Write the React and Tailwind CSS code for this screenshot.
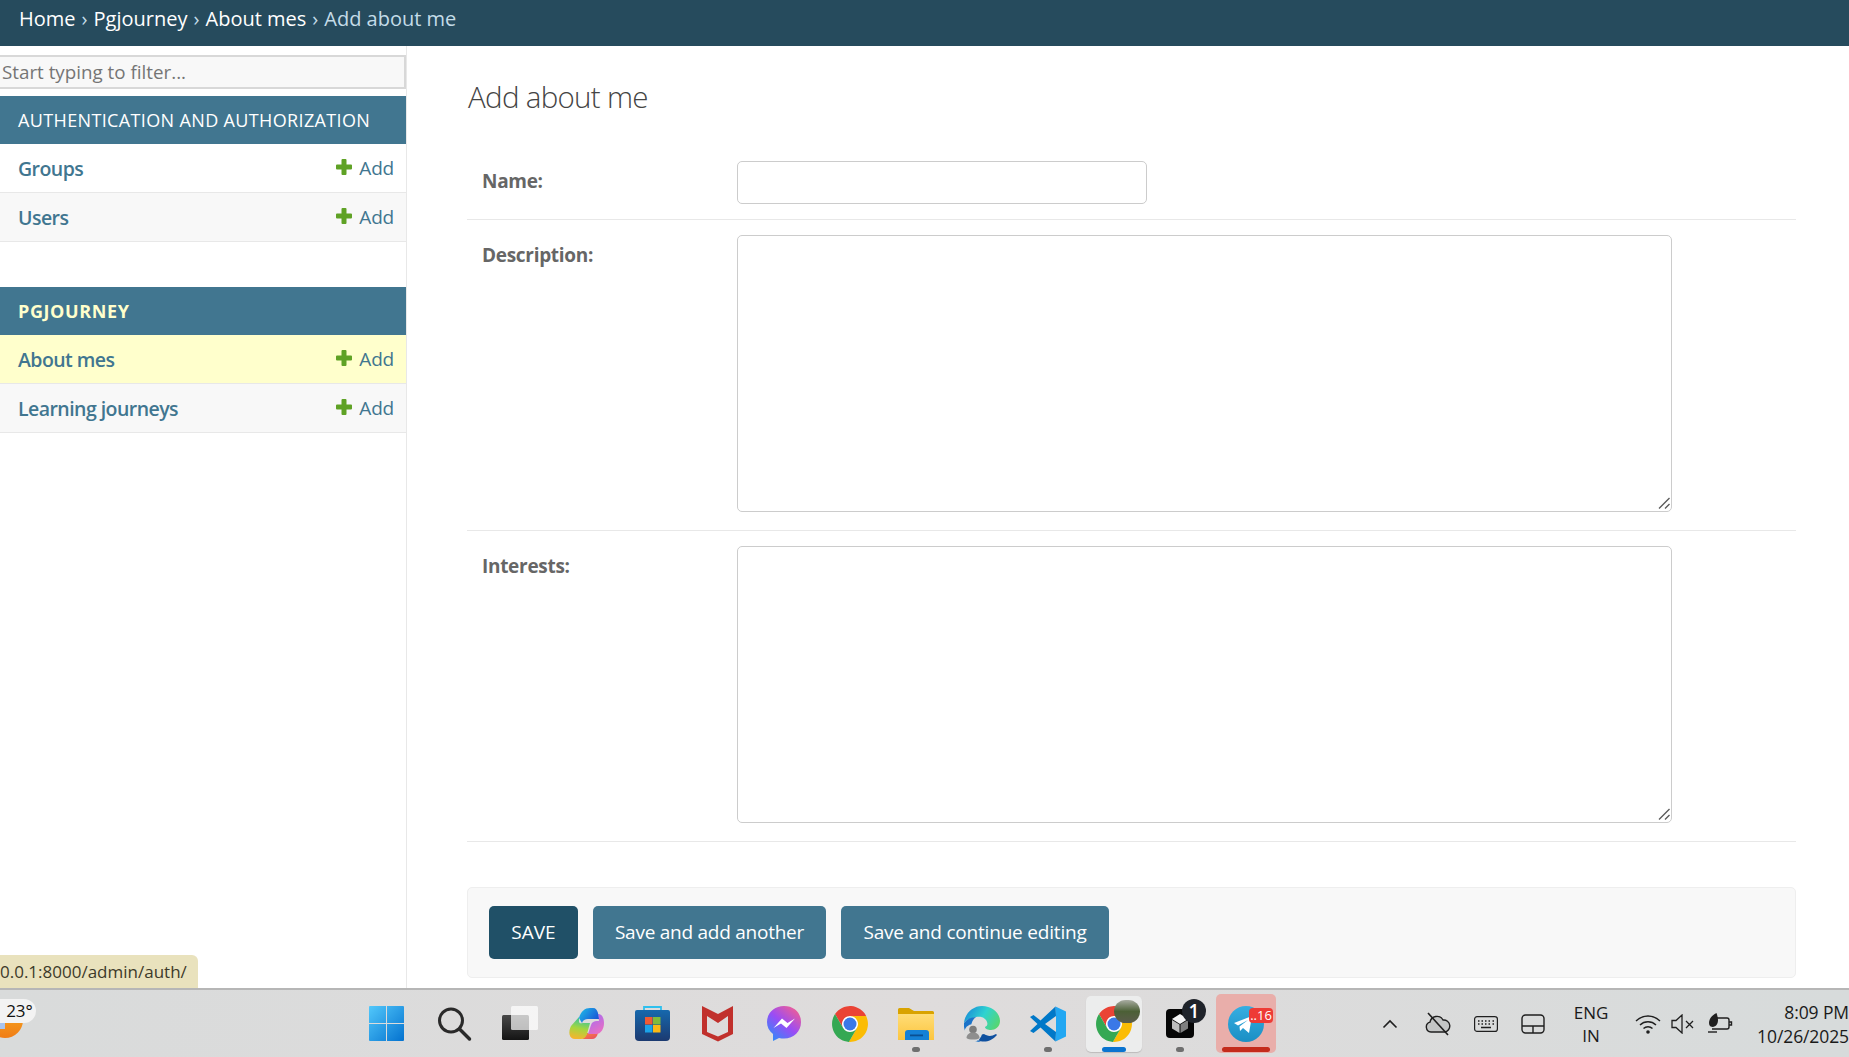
import React from 'react';

const FONT = 'font-["Open_Sans","Noto_Sans",sans-serif]';

const appGroups = [
  {
    name: 'Authentication and Authorization',
    models: [{ name: 'Groups' }, { name: 'Users' }],
  },
  {
    name: 'Pgjourney',
    current: true,
    models: [{ name: 'About mes', current: true }, { name: 'Learning journeys' }],
  },
];

const PlusIcon = () => (
  <svg width="16" height="16" viewBox="0 0 16 16" className="shrink-0 mb-[3px]">
    <path d="M5.500 1a1 1 0 0 1 1-1h3a1 1 0 0 1 1 1v4.500H15a1 1 0 0 1 1 1v3a1 1 0 0 1-1 1h-4.500V15a1 1 0 0 1-1 1h-3a1 1 0 0 1-1-1v-4.500H1a1 1 0 0 1-1-1v-3a1 1 0 0 1 1-1h4.500z" fill="#5fa225" />
  </svg>
);

const Sidebar = () => (
  <aside className="w-[407px] shrink-0 border-r border-[#e8e8e8] pt-[9px]">
    <input
      placeholder="Start typing to filter..."
      className="block w-full h-[34px] border-2 border-[#d8d8d8] border-l-0 bg-[#f8f8f8] px-[2px] text-[18.800px] text-[#333] placeholder:text-[#757575] outline-none"
    />
    {appGroups.map((group) => (
      <div key={group.name} className="mt-[7px] mb-[45px]">
        <div className={`h-[48px] bg-[#417690] flex items-center pl-[18px] text-[18px] uppercase ${group.current ? 'font-bold text-[#ffffcc] tracking-[0.6px]' : 'text-white tracking-[0.36px]'}`}>
          {group.name}
        </div>
        {group.models.map((model, i) => (
          <div
            key={model.name}
            className={`h-[49px] border-b border-[#e8e8e8] pt-[1px] flex items-center justify-between pl-[18px] pr-[12px] text-[#417690] text-[19px] ${model.current ? 'bg-[#ffffcc]' : i % 2 ? 'bg-[#f8f8f8]' : 'bg-white'}`}
          >
            <span className="font-semibold text-[19.500px] tracking-[-0.55px]">{model.name}</span>
            <span className="flex items-center gap-[7px] tracking-[-0.2px]">
              <PlusIcon />
              Add
            </span>
          </div>
        ))}
      </div>
    ))}
  </aside>
);

const FormRow = ({ label, children, className }) => (
  <div className={`flex border-b border-[#e8e8e8] pt-[15px] ${className}`}>
    <label className="w-[270px] shrink-0 pl-[15px] font-bold text-[#666] text-[19px] tracking-[-0.3px] leading-[40px]">{label}</label>
    {children}
  </div>
);

const Grip = () => (
  <svg width="12" height="12" viewBox="0 0 12 12" className="absolute right-[2px] bottom-[3px]" fill="none" stroke="#5c5c5c" strokeWidth="1.400">
    <path d="M1 11.500L11.500 1M7 11.500l4.500-4.500" />
  </svg>
);

const Area = () => (
  <div className="relative w-[935px] h-[277px]">
    <textarea className="block w-full h-full border border-[#cccccc] rounded-[5px] outline-none resize-none" />
    <Grip />
  </div>
);

const Main = () => (
  <main className="flex-1 min-w-0 pl-[60px] pr-[53px]">
    <h1 className="h-[100px] pt-[29px] text-[29.500px] tracking-[-0.7px] leading-[44px] font-light text-[#444] pl-[1px]">Add about me</h1>
    <FormRow label="Name:" className="h-[74px]">
      <input className="w-[410px] h-[43px] border border-[#cccccc] rounded-[5px] outline-none" />
    </FormRow>
    <FormRow label="Description:" className="h-[311px]">
      <Area />
    </FormRow>
    <FormRow label="Interests:" className="h-[311px]">
      <Area />
    </FormRow>
    <div className="mt-[45px] h-[91px] border border-[#eeeeee] rounded-[5px] bg-[#f8f8f8] flex items-center gap-[15px] pl-[21px] text-white text-[19px]">
      <button className="h-[53px] w-[89px] rounded-[5px] bg-[#205067] uppercase font-normal">Save</button>
      <button className="h-[53px] w-[233px] rounded-[5px] bg-[#417690] tracking-[-0.25px]">Save and add another</button>
      <button className="h-[53px] w-[268px] rounded-[5px] bg-[#417690] tracking-[-0.2px]">Save and continue editing</button>
    </div>
  </main>
);

// taskbar icons
const WindowsLogo = () => (
  <svg width="35" height="35" viewBox="0 0 35 35">
    <defs>
      <linearGradient id="win" x1="0" y1="0" x2="1" y2="1">
        <stop offset="0" stopColor="#52c8fb" />
        <stop offset="1" stopColor="#0472cf" />
      </linearGradient>
    </defs>
    <path d="M0 1a1 1 0 0 1 1-1h16v17H0zM18 0h16a1 1 0 0 1 1 1v16H18zM0 18h17v17H1a1 1 0 0 1-1-1zM18 18h17v16a1 1 0 0 1-1 1H18z" fill="url(#win)" />
  </svg>
);

const SearchIcon = () => (
  <svg width="36" height="36" viewBox="0 0 36 36" fill="none" stroke="#2a2a2a" strokeLinecap="round">
    <circle cx="15" cy="14.500" r="11.500" strokeWidth="3" />
    <path d="M23.500 23l10 10" strokeWidth="3.500" />
  </svg>
);

const TaskView = () => (
  <svg width="36" height="35" viewBox="0 0 36 35">
    <defs>
      <linearGradient id="tv" x1="0" y1="0" x2="0" y2="1">
        <stop offset="0" stopColor="#484848" />
        <stop offset="1" stopColor="#141414" />
      </linearGradient>
    </defs>
    <rect x="0" y="9" width="27" height="25" rx="1.500" fill="url(#tv)" />
    <rect x="9" y="0" width="27" height="24" rx="1.500" fill="#ffffff" fillOpacity="0.7" />
  </svg>
);

const Copilot = () => (
  <svg width="36" height="32" viewBox="0 0 36 32">
    <defs>
      <linearGradient id="cp1" x1="0" y1="0" x2="1" y2="0.600">
        <stop offset="0" stopColor="#1fc0e8" />
        <stop offset="1" stopColor="#1a56d6" />
      </linearGradient>
      <linearGradient id="cp2" x1="0.500" y1="0" x2="0.300" y2="1">
        <stop offset="0" stopColor="#2fc3a8" />
        <stop offset="0.500" stopColor="#a5d63f" />
        <stop offset="1" stopColor="#f8b32e" />
      </linearGradient>
      <linearGradient id="cp3" x1="0.300" y1="0" x2="0.800" y2="1">
        <stop offset="0" stopColor="#a66cf0" />
        <stop offset="1" stopColor="#ee6fc0" />
      </linearGradient>
      <linearGradient id="cp4" x1="0" y1="0" x2="1" y2="1">
        <stop offset="0" stopColor="#f98a38" />
        <stop offset="1" stopColor="#e8476a" />
      </linearGradient>
    </defs>
    <path d="M14 31h10c3 0 5-2 6-6H19c-1 3-3 5-5 6z" fill="url(#cp4)" />
    <path d="M11 9L3 18C0 24 1 31 7 31h6c3 0 5-2 6-5l3-11h-7c-2 0-3 1-4-1z" fill="url(#cp2)" />
    <path d="M30 6c4 0 6 4 6 9 0 6-3 11-8 11h-8l3-9c1-3 3-4 6-4h2z" fill="url(#cp3)" />
    <path d="M11 10C13 3 17 0 22 0h3c3 0 4 2 5 5l1 6H20c-3 0-5 1-6 4z" fill="url(#cp1)" />
  </svg>
);

const StoreIcon = () => (
  <svg width="35" height="35" viewBox="0 0 35 35">
    <defs>
      <linearGradient id="st" x1="0" y1="0" x2="0" y2="1">
        <stop offset="0" stopColor="#1668ad" />
        <stop offset="1" stopColor="#1c3a70" />
      </linearGradient>
    </defs>
    <path d="M9 5V1h17v4" fill="none" stroke="#2fc0ee" strokeWidth="1.800" />
    <path d="M0 6a2 2 0 0 1 2-2h31a2 2 0 0 1 2 2v25a4 4 0 0 1-4 4H4a4 4 0 0 1-4-4z" fill="url(#st)" />
    <path d="M10 11h7.500v7.500H10z" fill="#f05a33" />
    <path d="M18 11h7.500v7.500H18z" fill="#7fbb3c" />
    <path d="M10 19h7.500v7.500H10z" fill="#1ba3e8" />
    <path d="M18 19h7.500v7.500H18z" fill="#fab915" />
  </svg>
);

const McAfee = () => (
  <svg width="32" height="36" viewBox="0 0 32 36">
    <path fillRule="evenodd" d="M0 0l16 8 15-8v28l-15 7.500L0 28zM5 10v16l11 4.500L26 26V10l-10 7z" fill="#c1302c" />
  </svg>
);

const Messenger = () => (
  <svg width="34" height="36" viewBox="0 0 34 36">
    <defs>
      <linearGradient id="ms" x1="0.100" y1="1" x2="0.900" y2="0">
        <stop offset="0" stopColor="#2690fa" />
        <stop offset="0.500" stopColor="#9a4cf5" />
        <stop offset="1" stopColor="#f9608a" />
      </linearGradient>
    </defs>
    <path d="M17 0C7 0 0 7 0 16c0 5 2 9 6 12v7l6-3c2 .5 3 .6 5 .6 10 0 17-7.300 17-16.600S27 0 17 0z" fill="url(#ms)" />
    <path d="M6.500 22L15 12.500l5.500 4.500 7.500-4.500L19.500 22 14 17.500z" fill="#fff" />
  </svg>
);

const Chrome = () => (
  <svg width="36" height="36" viewBox="0 0 36 36">
    <circle cx="18" cy="18" r="8" fill="#fff" />
    <path d="M3.020 8.060A18 18 0 0 1 34.100 10H18a8 8 0 0 0-6.930 12z" fill="#ea4335" />
    <path d="M34.100 10A18 18 0 0 1 16.880 35.940L24.930 22A8 8 0 0 0 18 10z" fill="#fbbc04" />
    <path d="M16.880 35.940A18 18 0 0 1 3.020 8.060L11.070 22a8 8 0 0 0 13.860 0z" fill="#34a853" />
    <circle cx="18" cy="18" r="6.500" fill="#3b78e7" />
  </svg>
);

const Explorer = () => (
  <svg width="36" height="32" viewBox="0 0 36 32">
    <defs>
      <linearGradient id="ex" x1="0" y1="0" x2="0" y2="1">
        <stop offset="0" stopColor="#ffdd77" />
        <stop offset="1" stopColor="#fcc53f" />
      </linearGradient>
    </defs>
    <path d="M0 1.500A1.500 1.500 0 0 1 1.500 0H11l5 3h18.500A1.500 1.500 0 0 1 36 4.500V8H0z" fill="#d9a300" />
    <path d="M0 6h36v26H0z" fill="url(#ex)" />
    <path d="M7 25a3 3 0 0 1 3-3h18a3 3 0 0 1 3 3v7H7z" fill="#1581d6" />
    <rect x="12" y="26.500" width="13" height="1.800" fill="#0b4f91" />
  </svg>
);

const EdgeIcon = () => (
  <svg width="36" height="36" viewBox="0 0 36 36">
    <defs>
      <linearGradient id="ed" x1="0" y1="0.300" x2="1" y2="0.700">
        <stop offset="0" stopColor="#1a8ed8" />
        <stop offset="0.500" stopColor="#2fd3d0" />
        <stop offset="1" stopColor="#57d66e" />
      </linearGradient>
    </defs>
    <path d="M0 17C1 7 9 0 18 0c10 0 18 7 18 15 0 6-5 9-9 9-3 0-6-1-6-3 3-1 3-4 1-7-2-3-6-4-10-3-5 1-10 3-12 6z" fill="url(#ed)" />
    <path d="M0 17c3-4 7-6 12-6-4 3-6 8-4 14 1 5 5 9 9 11C7 36-1 28 0 17z" fill="#1b73c9" />
    <path d="M14 34c5 3 13 2 19-5l-1-1c-5 3-9 2-12 0-3 0-5 3-6 6z" fill="#0e4f9f" />
    <circle cx="9" cy="27" r="9" fill="#dcdcdc" />
    <circle cx="9" cy="23.500" r="3.800" fill="#7d7d7d" />
    <path d="M2.500 32c0-3.500 3-5.500 6.500-5.500s6.500 2 6.500 5.500c-2 2-11 2-13 0z" fill="#8e8e8e" />
  </svg>
);

const VSCode = () => (
  <svg width="36" height="36" viewBox="0 0 36 36">
    <path d="M25.500 0.500L36 5.500v25l-10.500 5 .5-9.500V10z" fill="#22a7f2" />
    <path d="M25.500 0.500L10.500 14.500 3.500 9 0 11l7.500 7L0 25l3.500 2 7-5.500 15 14 .5-9.500L15 18l11-8z" fill="#0078c8" />
  </svg>
);

const BoxIcon = () => (
  <svg width="28" height="29" viewBox="0 0 28 29">
    <rect x="0" y="0" width="28" height="29" rx="4" fill="#060606" />
    <path d="M6 10l8-5 8 5-8 5z" fill="#f4f4f4" />
    <path d="M6 11l7.500 4.500V24L6 19.500z" fill="#bdbdbd" />
    <path d="M22 11l-7.500 4.500V24l7.500-4.500z" fill="#7f7f7f" />
  </svg>
);

const Telegram = () => (
  <svg width="36" height="36" viewBox="0 0 36 36">
    <defs>
      <linearGradient id="tg" x1="0.500" y1="0" x2="0.500" y2="1">
        <stop offset="0" stopColor="#37aee2" />
        <stop offset="1" stopColor="#1a8fc4" />
      </linearGradient>
    </defs>
    <circle cx="18" cy="18" r="18" fill="url(#tg)" />
    <path d="M6 17l18-7-3 17-6-5-3 3-.5-4.500L20 14l-10 5.500z" fill="#fff" />
  </svg>
);

const taskItems = [
  { id: 'start', icon: <WindowsLogo />, nudge: 'mr-[3px]' },
  { id: 'search', icon: <SearchIcon /> },
  { id: 'taskview', icon: <TaskView /> },
  { id: 'copilot', icon: <Copilot /> },
  { id: 'store', icon: <StoreIcon /> },
  { id: 'mcafee', icon: <McAfee /> },
  { id: 'messenger', icon: <Messenger /> },
  { id: 'chrome', icon: <Chrome /> },
  { id: 'explorer', icon: <Explorer />, dot: true },
  { id: 'edge', icon: <EdgeIcon /> },
  { id: 'vscode', icon: <VSCode />, dot: true },
  {
    id: 'chromeActive',
    tile: 'top-[6px] bottom-[5px] left-[5px] right-[5px] bg-[#eceded] shadow-[0_1px_1px_rgba(0,0,0,0.15)]',
    bar: 'bg-[#0a74d0] w-[24px]',
    icon: <Chrome />,
    badge: <span className="absolute top-[10px] right-[7px] w-[26px] h-[23px] rounded-full bg-gradient-to-b from-[#a9aca2] via-[#4c6036] to-[#5c5c4c]" />,
  },
  {
    id: 'box',
    icon: <BoxIcon />,
    dot: true,
    badge: <span className="absolute top-[9px] right-[7px] w-[24px] h-[24px] rounded-full bg-[#1f232a] text-white text-[19px] font-semibold flex items-center justify-center">1</span>,
  },
  {
    id: 'telegram',
    tile: 'top-[4px] bottom-[4px] left-[3px] right-[3px] bg-[#e9aeaa]',
    bar: 'bg-[#c42b1c] w-[48px]',
    icon: <Telegram />,
    badge: <span className="absolute top-[18px] right-[6px] w-[24px] h-[15px] rounded-[4px] bg-[#ee3b36] text-white text-[13px] leading-[15px] text-center">..16</span>,
  },
];

const TaskItem = ({ item }) => (
  <div className="relative w-[66px] h-full shrink-0 flex items-center justify-center">
    {item.tile && <div className={`absolute rounded-[5px] ${item.tile}`} />}
    <div className={`relative flex ${item.nudge || ''}`}>{item.icon}</div>
    {item.badge}
    {item.dot && <div className="absolute bottom-[5px] w-[8px] h-[5px] rounded-full bg-[#6f6f6f]" />}
    {item.bar && <div className={`absolute bottom-[5px] h-[5px] rounded-full ${item.bar}`} />}
  </div>
);

const TrayIcons = {
  chevron: (
    <svg width="16" height="10" viewBox="0 0 16 10" fill="none" stroke="#1f1f1f" strokeWidth="1.600">
      <path d="M1.500 8.500L8 2l6.500 6.500" />
    </svg>
  ),
  cloud: (
    <svg width="26" height="24" viewBox="0 0 26 24" fill="none" stroke="#1f1f1f" strokeWidth="1.400">
      <path d="M6 20a5 5 0 0 1-1-9.800A7 7 0 0 1 18 8a5.800 5.800 0 0 1 1.500 12z" fill="#c4c6c6" />
      <path d="M3 1l20 22" strokeWidth="1.600" />
    </svg>
  ),
  keyboard: (
    <svg width="24" height="16" viewBox="0 0 24 16" fill="none" stroke="#1f1f1f" strokeWidth="1.200">
      <rect x="0.600" y="0.600" width="22.800" height="14.800" rx="2.500" />
      <path d="M4 5h1.500M7.500 5H9M11 5h1.500M14.500 5H16M18.500 5H20M4 8h1.500M7.500 8H9M11 8h1.500M14.500 8H16M18.500 8H20M7 11.500h10" strokeWidth="1.500" />
    </svg>
  ),
  touchpad: (
    <svg width="24" height="20" viewBox="0 0 24 20" fill="none" stroke="#1f1f1f" strokeWidth="1.400">
      <rect x="1" y="1" width="22" height="18" rx="3.500" />
      <path d="M1 12h22M12 12v7" />
    </svg>
  ),
  wifi: (
    <svg width="26" height="20" viewBox="0 0 26 20" fill="none" stroke="#1f1f1f" strokeWidth="1.400">
      <path d="M1 7a17 17 0 0 1 24 0M5 11a11.500 11.500 0 0 1 16 0M8.500 14.500a6.500 6.500 0 0 1 9 0" />
      <circle cx="13" cy="18" r="1.800" fill="#1f1f1f" stroke="none" />
    </svg>
  ),
  speaker: (
    <svg width="24" height="20" viewBox="0 0 24 20" fill="none" stroke="#1f1f1f" strokeWidth="1.300">
      <path d="M1 6.500h4L11 1v18l-6-5.500H1z" />
      <path d="M15 7l7 7M22 7l-7 7" />
    </svg>
  ),
  battery: (
    <svg width="26" height="24" viewBox="0 0 26 24" fill="none" stroke="#1f1f1f" strokeWidth="1.400">
      <path d="M9 6h11a2 2 0 0 1 2 2v7a2 2 0 0 1-2 2H5M22 10h2.500v3H22" />
      <path d="M9.500 1C5 3 2 7 2 11c0 3 2 4 4 4 4-1 5-4 5-7 0-3-1-5-1.500-7z" fill="#1f1f1f" stroke="none" />
      <path d="M1 20h9" />
    </svg>
  ),
};

const Taskbar = () => (
  <footer className="h-[69px] shrink-0 border-t-2 border-[#b6b6b6] bg-gradient-to-r from-[#d9dbdb] via-[#dfdcdc] to-[#d7dbdb] flex items-stretch text-[#1a1a1a] overflow-hidden">
    <div className="w-[355px] shrink-0 relative">
      <div className="absolute left-[-13px] top-[12px] w-[36px] h-[36px] rounded-full bg-gradient-to-b from-[#f6b126] to-[#f07c15]" />
      <div className="absolute left-0 top-[31px] w-[5px] h-[8px] bg-[#a9c4ee]" />
      <div className="absolute left-0 top-[9px] w-[36px] h-[24px] pl-[3px] rounded-r-full bg-[#f3f3f3] flex items-center justify-center text-[17px] text-[#111]">23°</div>
    </div>
    {taskItems.map((item) => (
      <TaskItem key={item.id} item={item} />
    ))}
    <div className="w-[102px] shrink-0" />
    <div className="flex items-center shrink-0">
      <div className="w-[17px] flex justify-center">{TrayIcons.chevron}</div>
      <div className="w-[26px] ml-[27px] flex justify-center">{TrayIcons.cloud}</div>
      <div className="w-[24px] ml-[23px] flex justify-center">{TrayIcons.keyboard}</div>
      <div className="w-[24px] ml-[23px] flex justify-center">{TrayIcons.touchpad}</div>
      <div className="w-[44px] ml-[24px] text-center text-[17px] leading-[23px]">ENG<br />IN</div>
      <div className="w-[26px] ml-[22px] flex justify-center">{TrayIcons.wifi}</div>
      <div className="w-[24px] ml-[10px] flex justify-center">{TrayIcons.speaker}</div>
      <div className="w-[26px] ml-[12px] flex justify-center">{TrayIcons.battery}</div>
      <div className="ml-[23px] w-[93px] shrink-0 text-right whitespace-nowrap text-[17.500px] tracking-[-0.1px] leading-[24px]">8:09 PM<br />10/26/2025</div>
    </div>
  </footer>
);

const App = () => (
  <div className={`relative h-screen flex flex-col overflow-hidden bg-white ${FONT}`}>
    <header className="h-[46px] shrink-0 bg-[#264b5d] flex items-start pl-[19px] pt-[3px] text-[20px] leading-[32px] text-[#c4dce8]">
      <a className="text-white">Home</a>
      <span className="mx-[6px] text-[#c4dce8]">›</span>
      <a className="text-white">Pgjourney</a>
      <span className="mx-[6px]">›</span>
      <a className="text-white">About mes</a>
      <span className="mx-[6px]">›</span>
      Add about me
    </header>
    <div className="flex-1 min-h-0 flex">
      <Sidebar />
      <Main />
    </div>
    <Taskbar />
    <div className="absolute left-0 bottom-[69px] w-[198px] h-[33px] rounded-tr-[6px] bg-[#e9e2bd] overflow-hidden text-[17px] leading-[33px] text-[#3d3a2a] whitespace-nowrap">
      0.0.1:8000/admin/auth/
    </div>
  </div>
);

export default App;
